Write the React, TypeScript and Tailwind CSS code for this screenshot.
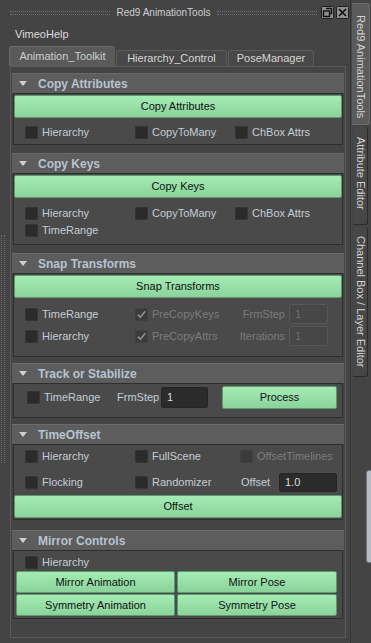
import React from "react";

const Check = ({
  label, checked = false, disabled = false,
}: {
  label: string; checked?: boolean; disabled?: boolean;
}) => (
  <div className="flex items-center">
    <span className={`w-[13px] h-[13px] rounded-[1px] border flex items-center justify-center shrink-0
      ${disabled ? "bg-[#3b3b3b] border-[#414141]" : "bg-[#2b2b2b] border-[#343434]"}`}>
      {checked && (
        <svg width="11" height="11" viewBox="0 0 11 11">
          <path d="M1.8 5.6 L4.4 8.3 L9.2 2.2" stroke="#8c8c8c" strokeWidth="1.7" fill="none" />
        </svg>
      )}
    </span>
    <span className={`ml-[4px] whitespace-nowrap ${disabled ? "text-[#7b7b7b]" : "text-[#c5ccd4]"}`}>{label}</span>
  </div>
);

const GreenBtn = ({ children, className = "" }: { children: React.ReactNode; className?: string }) => (
  <div className={`flex items-center justify-center rounded-[2px] border border-[#5e9a6b] bg-linear-to-b from-[#a4ecb3] to-[#8bd39c] text-[#111] whitespace-nowrap ${className}`}>
    {children}
  </div>
);

const Field = ({ value, width, height, disabled = false }: { value: string; width: string; height: string; disabled?: boolean }) => (
  <div className={`${width} ${height} flex items-center pl-[5px] rounded-[2px] border
    ${disabled ? "border-[#575757] bg-[#474747] text-[#6d6d6d]" : "border-[#262626] bg-[#2b2b2b] text-[#dcdcdc]"}`}>
    {value}
  </div>
);

const Frame = ({ title, children, className = "" }: { title: string; children: React.ReactNode; className?: string }) => (
  <div className={className}>
    <div className="h-[20px] ml-[1px] mr-[1px] bg-[#5d5d5d] border-t border-[#6a6a6a] flex items-center">
      <svg width="8" height="5" viewBox="0 0 8 5" className="ml-[7px]">
        <path d="M0 0 H8 L4 5 Z" fill="#cfcfcf" />
      </svg>
      <span className="ml-[11px] text-[12px] font-bold text-[#b7c3d0]">{title}</span>
    </div>
    <div className="ml-[2px] mr-[2px] border border-[#2e2e2e] bg-[#4a4a4a]">{children}</div>
  </div>
);

const Grip = ({ className = "" }: { className?: string }) => (
  <div className={`h-[4px] border-y border-dotted border-[#727272] ${className}`} />
);

export default function App() {
  return (
    <div className="w-[371px] h-[643px] bg-[#444] flex overflow-hidden font-['Liberation_Sans',Arial,sans-serif] text-[11px] leading-none">
      {/* floating tool window */}
      <div className="w-[350px] flex flex-col">
        <div className="h-[22px] flex items-center pl-[10px] pt-[3px]">
          <Grip className="w-[100px]" />
          <div className="w-[107px] text-center text-[10px] text-[#cfcfcf] whitespace-nowrap">Red9 AnimationTools</div>
          <Grip className="w-[100px]" />
          <svg width="13" height="13" viewBox="0 0 13 13" className="ml-[4px]">
            <rect x="0.5" y="0.5" width="12" height="12" rx="1" fill="#8f8f8f" stroke="#1e1e1e" />
            <path d="M5 2.5 H10.5 V7.5 H8.5" stroke="#111" strokeWidth="1.4" fill="none" />
            <rect x="2.5" y="5" width="6" height="5.5" stroke="#111" strokeWidth="1.4" fill="none" />
          </svg>
          <svg width="13" height="13" viewBox="0 0 13 13" className="ml-[2px]">
            <rect x="0.5" y="0.5" width="12" height="12" rx="1" fill="#8f8f8f" stroke="#1e1e1e" />
            <path d="M3 3 L10 10 M10 3 L3 10" stroke="#111" strokeWidth="1.7" />
          </svg>
        </div>

        <div className="h-[24px] flex items-center pl-[15px] text-[#dcdcdc]">VimeoHelp</div>

        <div className="h-[20px] flex items-end pl-[9px]">
          <div className="w-[106px] h-[20px] flex items-center justify-center rounded-t-[3px] bg-[#5a5a5a] border-t border-l border-[#6c6c6c] text-[#cdcdcd]">
            Animation_Toolkit
          </div>
          <div className="w-[111px] h-[16px] ml-[1px] flex items-center justify-center rounded-t-[3px] bg-[#484848] border border-b-0 border-[#5b5b5b] text-[#d6d6d6]">
            Hierarchy_Control
          </div>
          <div className="w-[86px] h-[16px] ml-[1px] flex items-center justify-center rounded-t-[3px] bg-[#484848] border border-b-0 border-[#5b5b5b] text-[#d6d6d6]">
            PoseManager
          </div>
        </div>

        <div className="flex-1 flex">
          <div className="w-[10px]">
            <div className="ml-[1px] mt-[169px] w-[4px] h-[228px] border-x border-dotted border-[#686868]" />
          </div>
          <div className="w-[336px] mb-[5px] border border-[#5a5a5a] pt-[6px]">
            <Frame title="Copy Attributes">
              <GreenBtn className="h-[23px] mt-[1px]">Copy Attributes</GreenBtn>
              <div className="h-[22px] mt-[3px] mb-[1px] flex items-center pl-[11px]">
                <div className="w-[110px]"><Check label="Hierarchy" /></div>
                <div className="w-[100px]"><Check label="CopyToMany" /></div>
                <Check label="ChBox Attrs" />
              </div>
            </Frame>

            <Frame title="Copy Keys" className="mt-[8px]">
              <GreenBtn className="h-[23px] mt-[1px]">Copy Keys</GreenBtn>
              <div className="h-[17px] mt-[7px] flex items-center pl-[11px]">
                <div className="w-[110px]"><Check label="Hierarchy" /></div>
                <div className="w-[100px]"><Check label="CopyToMany" /></div>
                <Check label="ChBox Attrs" />
              </div>
              <div className="h-[17px] mb-[5px] flex items-center pl-[11px]">
                <Check label="TimeRange" />
              </div>
            </Frame>

            <Frame title="Snap Transforms" className="mt-[8px]">
              <GreenBtn className="h-[23px] mt-[1px]">Snap Transforms</GreenBtn>
              <div className="h-[20px] mt-[6px] flex items-center pl-[11px]">
                <div className="w-[110px]"><Check label="TimeRange" /></div>
                <div className="w-[100px]"><Check label="PreCopyKeys" checked disabled /></div>
                <div className="w-[50px] text-right text-[#7b7b7b]">FrmStep</div>
                <div className="ml-[4px]"><Field value="1" width="w-[39px]" height="h-[20px]" disabled /></div>
              </div>
              <div className="h-[20px] mt-[2px] mb-[10px] flex items-center pl-[11px]">
                <div className="w-[110px]"><Check label="Hierarchy" /></div>
                <div className="w-[100px]"><Check label="PreCopyAttrs" checked disabled /></div>
                <div className="w-[50px] text-right text-[#7b7b7b]">Iterations</div>
                <div className="ml-[4px]"><Field value="1" width="w-[39px]" height="h-[20px]" disabled /></div>
              </div>
            </Frame>

            <Frame title="Track or Stabilize" className="mt-[6px]">
              <div className="h-[23px] mt-[2px] mb-[8px] flex items-center pl-[13px]">
                <div className="w-[90px]"><Check label="TimeRange" /></div>
                <div className="w-[44px] text-[#c5ccd4]">FrmStep</div>
                <Field value="1" width="w-[47px]" height="h-[21px]" />
                <GreenBtn className="ml-[14px] w-[115px] h-[23px]">Process</GreenBtn>
              </div>
            </Frame>

            <Frame title="TimeOffset" className="mt-[6px]">
              <div className="h-[20px] mt-[1px] flex items-center pl-[11px]">
                <div className="w-[110px]"><Check label="Hierarchy" /></div>
                <div className="w-[105px]"><Check label="FullScene" /></div>
                <Check label="OffsetTimelines" disabled />
              </div>
              <div className="h-[20px] mt-[6px] flex items-center pl-[11px]">
                <div className="w-[110px]"><Check label="Flocking" /></div>
                <div className="w-[106px]"><Check label="Randomizer" /></div>
                <div className="w-[38px] text-[#c5ccd4]">Offset</div>
                <Field value="1.0" width="w-[58px]" height="h-[19px]" />
              </div>
              <GreenBtn className="h-[23px] mt-[3px] mb-[1px]">Offset</GreenBtn>
            </Frame>

            <Frame title="Mirror Controls" className="mt-[10px]">
              <div className="h-[18px] mt-[2px] flex items-center pl-[11px]">
                <Check label="Hierarchy" />
              </div>
              <div className="pl-[2px] mb-[2px] flex flex-col gap-[1px]">
                <div className="flex gap-[2px]">
                  <GreenBtn className="w-[159px] h-[22px]">Mirror Animation</GreenBtn>
                  <GreenBtn className="w-[160px] h-[22px]">Mirror Pose</GreenBtn>
                </div>
                <div className="flex gap-[2px]">
                  <GreenBtn className="w-[159px] h-[22px]">Symmetry Animation</GreenBtn>
                  <GreenBtn className="w-[160px] h-[22px]">Symmetry Pose</GreenBtn>
                </div>
              </div>
            </Frame>
          </div>
        </div>
      </div>

      {/* docked vertical tabs */}
      <div className="w-[21px] border-l border-[#353535] flex flex-col">
        <div className="ml-[1px] mt-[3px] w-[18px] h-[122px] rounded-r-[3px] bg-[#5b5b5b] border-t border-r border-b border-[#6d6d6d] pt-[11px] flex justify-center">
          <span className="[writing-mode:vertical-rl] text-[#d2d2d2] whitespace-nowrap">Red9 AnimationTools</span>
        </div>
        <div className="ml-[2px] mt-[2px] w-[15px] h-[98px] rounded-r-[3px] bg-[#474747] border-r border-b border-[#2b2b2b] pt-[10px] flex justify-center">
          <span className="[writing-mode:vertical-rl] text-[#d2d2d2] whitespace-nowrap">Attribute Editor</span>
        </div>
        <div className="ml-[2px] mt-[2px] w-[15px] h-[150px] rounded-r-[3px] bg-[#474747] border-r border-b border-[#2b2b2b] pt-[9px] flex justify-center">
          <span className="[writing-mode:vertical-rl] text-[#d2d2d2] whitespace-nowrap">Channel Box / Layer Editor</span>
        </div>
        <div className="self-end mt-[93px] w-[5px] h-[93px] rounded-l-[3px] bg-[#b7bcc4] border-l border-t border-b border-[#737a84]" />
      </div>
    </div>
  );
}
